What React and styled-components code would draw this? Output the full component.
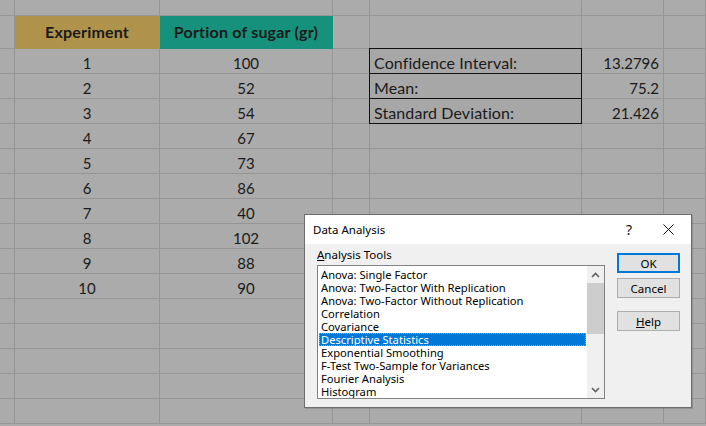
import React from 'react'
import styled, { createGlobalStyle } from 'styled-components'

const GlobalStyle = createGlobalStyle`
  html, body {
    margin: 0;
    padding: 0;
    background: #ababab;
    overflow: hidden;
  }
`

const COLS = [15, 145, 173, 37, 212, 82, 42]
const ROWS = [16, 33, 25, 25, 25, 25, 25, 25, 25, 25, 25, 25, 25, 25, 25, 25, 25]

const Page = styled.div`
  position: relative;
  width: 706px;
  height: 426px;
  overflow: hidden;
`

const Sheet = styled.div`
  display: grid;
  grid-template-columns: ${COLS.map((c) => c + 'px').join(' ')};
  grid-template-rows: ${ROWS.map((r) => r + 'px').join(' ')};
  font-family: Lato, "Liberation Sans", sans-serif;
  font-size: 15px;
  color: #1a1a1a;
`

const Cell = styled.div`
  box-sizing: border-box;
  border-right: 1px solid #959595;
  border-bottom: 1px solid #959595;
  display: flex;
  align-items: flex-end;
  padding: 0 4px 0;
  line-height: 20px;
  white-space: nowrap;
  justify-content: ${(p) => (p.$align === 'right' ? 'flex-end' : p.$align === 'left' ? 'flex-start' : 'center')};
  background: ${(p) => p.$bg || 'transparent'};
  font-weight: ${(p) => (p.$bold ? 700 : 400)};
  ${(p) => p.$head && 'align-items: center; border-color: transparent; font-size: 16px; letter-spacing: 0.2px;'}
  ${(p) => p.$boxed && 'border: 1px solid #111; background: #a7a7a7; margin: -1px 0 0 -1px; padding-left: 4px; font-size: 16px; letter-spacing: 0.1px;'}
`

const data = [100, 52, 54, 67, 73, 86, 40, 102, 88, 90]
const stats = [
  ['Confidence Interval:', '13.2796'],
  ['Mean:', '75.2'],
  ['Standard Deviation:', '21.426'],
]

function SheetGrid() {
  const rows = []
  for (let r = 0; r < ROWS.length; r++) {
    for (let c = 0; c < COLS.length; c++) {
      const key = r + '-' + c
      let props = {}
      let text = ''
      if (r === 1 && c === 1) {
        props = { $head: true, $bold: true, $bg: '#af934a' }
        text = 'Experiment'
      } else if (r === 1 && c === 2) {
        props = { $head: true, $bold: true, $bg: '#16917b' }
        text = 'Portion of sugar (gr)'
      } else if (r >= 2 && r < 12 && c === 1) {
        text = String(r - 1)
      } else if (r >= 2 && r < 12 && c === 2) {
        text = String(data[r - 2])
      } else if (r >= 2 && r < 5 && c === 4) {
        props = { $boxed: true, $align: 'left' }
        text = stats[r - 2][0]
      } else if (r >= 2 && r < 5 && c === 5) {
        props = { $align: 'right' }
        text = stats[r - 2][1]
      }
      rows.push(
        <Cell key={key} {...props}>
          {text}
        </Cell>
      )
    }
  }
  return <Sheet>{rows}</Sheet>
}

const Dialog = styled.div`
  position: absolute;
  left: 304px;
  top: 214px;
  width: 388px;
  height: 194px;
  box-sizing: border-box;
  border: 1px solid #6d6d6d;
  background: #f0f0f0;
  font-family: "Noto Sans", "Open Sans", sans-serif;
  font-size: 11.2px;
  color: #000;
  box-shadow: 1px 1px 0 rgba(0, 0, 0, 0.15);
  display: flex;
  flex-direction: column;
`

const TitleBar = styled.div`
  height: 29px;
  background: #fff;
  display: flex;
  align-items: center;
  padding-left: 8px;
  font-size: 11.5px;
`

const TitleText = styled.div`
  flex: 1;
`

const TitleButton = styled.div`
  width: ${(p) => p.$w}px;
  display: flex;
  justify-content: center;
  align-items: center;
  font-size: 14px;
  color: #111;
`

const Body = styled.div`
  flex: 1;
  display: flex;
  padding: 0 10px 0 12px;
  gap: 12px;
`

const LeftCol = styled.div`
  display: flex;
  flex-direction: column;
`

const Label = styled.div`
  height: 21px;
  display: flex;
  align-items: center;
  font-size: 11.5px;
  & u {
    text-decoration: underline;
  }
`

const ListBox = styled.div`
  width: 288px;
  height: 134px;
  box-sizing: border-box;
  border: 1px solid #828282;
  background: #fff;
  display: flex;
  overflow: hidden;
`

const Items = styled.div`
  flex: 1;
  padding: 1.5px 1px 0 1px;
  overflow: hidden;
`

const Item = styled.div`
  height: 13px;
  line-height: 13px;
  padding-left: 2px;
  white-space: nowrap;
  box-sizing: border-box;
  ${(p) =>
    p.$selected &&
    `background: #0078d7; color: #fff; outline: 1px dotted #f0a040; outline-offset: -1px;`}
`

const ScrollBar = styled.div`
  width: 17px;
  background: #f0f0f0;
  display: flex;
  flex-direction: column;
  align-items: center;
`

const Arrow = styled.div`
  height: 17px;
  width: 17px;
  display: flex;
  align-items: center;
  justify-content: center;
`

const Track = styled.div`
  flex: 1;
  width: 17px;
  display: flex;
  flex-direction: column;
`

const Thumb = styled.div`
  height: 51px;
  width: 17px;
  background: #cdcdcd;
`

const Buttons = styled.div`
  display: flex;
  flex-direction: column;
  padding-top: 9px;
  gap: 5px;
`

const Button = styled.div`
  width: 63px;
  height: 20px;
  box-sizing: border-box;
  background: #e1e1e1;
  border: ${(p) => (p.$default ? '2px solid #0078d7' : '1px solid #adadad')};
  display: flex;
  align-items: center;
  justify-content: center;
  font-size: 11.5px;
  margin-top: ${(p) => p.$gap || 0}px;
`

const tools = [
  'Anova: Single Factor',
  'Anova: Two-Factor With Replication',
  'Anova: Two-Factor Without Replication',
  'Correlation',
  'Covariance',
  'Descriptive Statistics',
  'Exponential Smoothing',
  'F-Test Two-Sample for Variances',
  'Fourier Analysis',
  'Histogram',
]

const Chevron = ({ up }) => (
  <svg width="9" height="6" viewBox="0 0 9 6">
    <path
      d={up ? 'M1 5 L4.5 1.5 L8 5' : 'M1 1 L4.5 4.5 L8 1'}
      fill="none"
      stroke="#606060"
      strokeWidth="1.6"
    />
  </svg>
)

const CloseIcon = () => (
  <svg width="11" height="11" viewBox="0 0 11 11">
    <path d="M0.5 0.5 L10.5 10.5 M10.5 0.5 L0.5 10.5" stroke="#111" strokeWidth="1" />
  </svg>
)

function DataAnalysis() {
  return (
    <Dialog>
      <TitleBar>
        <TitleText>Data Analysis</TitleText>
        <TitleButton $w={32}>?</TitleButton>
        <TitleButton $w={46}>
          <CloseIcon />
        </TitleButton>
      </TitleBar>
      <Body>
        <LeftCol>
          <Label>
            <span>
              <u>A</u>nalysis Tools
            </span>
          </Label>
          <ListBox>
            <Items>
              {tools.map((t) => (
                <Item key={t} $selected={t === 'Descriptive Statistics'}>
                  {t}
                </Item>
              ))}
            </Items>
            <ScrollBar>
              <Arrow>
                <Chevron up />
              </Arrow>
              <Track>
                <Thumb />
              </Track>
              <Arrow>
                <Chevron />
              </Arrow>
            </ScrollBar>
          </ListBox>
        </LeftCol>
        <Buttons>
          <Button $default>OK</Button>
          <Button>Cancel</Button>
          <Button $gap={8}>
            <span>
              <u>H</u>elp
            </span>
          </Button>
        </Buttons>
      </Body>
    </Dialog>
  )
}

export default function App() {
  return (
    <>
      <GlobalStyle />
      <Page>
        <SheetGrid />
        <DataAnalysis />
      </Page>
    </>
  )
}
